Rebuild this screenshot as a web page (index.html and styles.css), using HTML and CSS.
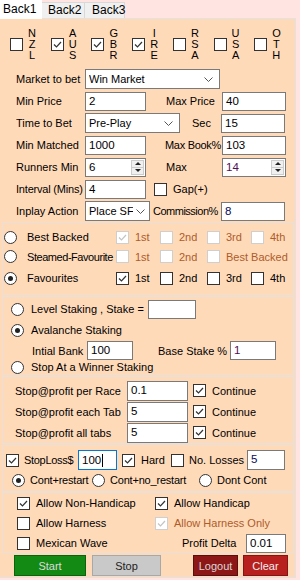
FILE: index.html
```html
<!DOCTYPE html>
<html lang="en">
<head>
  <meta charset="UTF-8">
  <title>Back1</title>
  <link rel="stylesheet" href="styles.css">
</head>
<body>
  <div class="tabs">
    <div class="tab tab-1 active">Back1</div>
    <div class="tab tab-2">Back2</div>
    <div class="tab tab-3">Back3</div>
  </div>

  <div class="panel">
    <div class="countries">
      <div class="country"><span class="cb"></span><span class="code">N<br>Z<br>L</span></div>
      <div class="country"><span class="cb on"><svg viewBox="0 0 11 11"><polyline points="2,5.5 4.5,8 9,3"/></svg></span><span class="code">A<br>U<br>S</span></div>
      <div class="country"><span class="cb on"><svg viewBox="0 0 11 11"><polyline points="2,5.5 4.5,8 9,3"/></svg></span><span class="code">G<br>B<br>R</span></div>
      <div class="country"><span class="cb on"><svg viewBox="0 0 11 11"><polyline points="2,5.5 4.5,8 9,3"/></svg></span><span class="code">I<br>R<br>E</span></div>
      <div class="country"><span class="cb"></span><span class="code">R<br>S<br>A</span></div>
      <div class="country"><span class="cb"></span><span class="code">U<br>S<br>A</span></div>
      <div class="country"><span class="cb"></span><span class="code">O<br>T<br>H</span></div>
    </div>

    <div class="form">
      <div class="row">
        <span class="lbl">Market to bet</span>
        <div class="select w-market"><span class="sel-text">Win Market</span><svg viewBox="0 0 9 5"><polyline points="0.5,0.5 4.5,4.5 8.5,0.5"/></svg></div>
      </div>
      <div class="row">
        <span class="lbl">Min Price</span>
        <div class="field">2</div>
        <span class="lbl2">Max Price</span>
        <div class="field field2">40</div>
      </div>
      <div class="row">
        <span class="lbl">Time to Bet</span>
        <div class="select w-time"><span class="sel-text">Pre-Play</span><svg viewBox="0 0 9 5"><polyline points="0.5,0.5 4.5,4.5 8.5,0.5"/></svg></div>
        <span class="lbl-sec">Sec</span>
        <div class="field field2">15</div>
      </div>
      <div class="row">
        <span class="lbl">Min Matched</span>
        <div class="field">1000</div>
        <span class="lbl2 lbl-book">Max Book%</span>
        <div class="field field2">103</div>
      </div>
      <div class="row">
        <span class="lbl">Runners Min</span>
        <div class="spin"><span class="spin-val">6</span><span class="spin-btns"><span class="up"></span><span class="down"></span></span></div>
        <span class="lbl2">Max</span>
        <div class="spin spin2"><span class="spin-val purple">14</span><span class="spin-btns"><span class="up"></span><span class="down"></span></span></div>
      </div>
      <div class="row">
        <span class="lbl lbl-tight">Interval (Mins)</span>
        <div class="field">4</div>
        <span class="gap-check"><span class="cb"></span>Gap(+)</span>
      </div>
      <div class="row">
        <span class="lbl">Inplay Action</span>
        <div class="select w-inplay"><span class="sel-text">Place SF</span><svg viewBox="0 0 9 5"><polyline points="0.5,0.5 4.5,4.5 8.5,0.5"/></svg></div>
        <span class="lbl-comm">Commission%</span>
        <div class="field field2 navy">8</div>
      </div>
    </div>

    <div class="group g-select">
      <div class="opt-row h20">
        <span class="opt"><span class="rb"></span>Best Backed</span>
        <span class="chk dim"><span class="cb dis on"><svg viewBox="0 0 11 11"><polyline points="2,5.5 4.5,8 9,3"/></svg></span>1st</span>
        <span class="chk dim"><span class="cb dis"></span>2nd</span>
        <span class="chk dim"><span class="cb dis"></span>3rd</span>
        <span class="chk dim"><span class="cb dis"></span>4th</span>
      </div>
      <div class="opt-row h19">
        <span class="opt"><span class="rb"></span><span class="tight">Steamed-Favourite</span></span>
        <span class="chk dim"><span class="cb dis"></span>1st</span>
        <span class="chk dim"><span class="cb dis"></span>2nd</span>
        <span class="chk dim span2"><span class="cb dis"></span>Best Backed</span>
      </div>
      <div class="opt-row h24">
        <span class="opt"><span class="rb on"></span>Favourites</span>
        <span class="chk"><span class="cb on"><svg viewBox="0 0 11 11"><polyline points="2,5.5 4.5,8 9,3"/></svg></span>1st</span>
        <span class="chk"><span class="cb"></span>2nd</span>
        <span class="chk"><span class="cb"></span>3rd</span>
        <span class="chk"><span class="cb"></span>4th</span>
      </div>
    </div>

    <div class="group g-staking">
      <div class="stake-row h20">
        <span class="rb"></span><span class="stake-label">Level Staking , Stake =</span>
        <div class="field w-stake"></div>
      </div>
      <div class="stake-row h22">
        <span class="rb on"></span><span class="stake-label">Avalanche Staking</span>
      </div>
      <div class="bank-row">
        <span class="bank-label">Intial Bank</span>
        <div class="field w-bank">100</div>
        <span class="base-label">Base Stake %</span>
        <div class="field w-bank purple">1</div>
      </div>
      <div class="stake-row h14">
        <span class="rb"></span><span class="stake-label">Stop At a Winner Staking</span>
      </div>
    </div>

    <div class="group g-profit">
      <div class="profit-row">
        <span class="profit-label">Stop@profit per Race</span>
        <div class="field w-profit">0.1</div>
        <span class="cont"><span class="cb on"><svg viewBox="0 0 11 11"><polyline points="2,5.5 4.5,8 9,3"/></svg></span>Continue</span>
      </div>
      <div class="profit-row">
        <span class="profit-label">Stop@profit each Tab</span>
        <div class="field w-profit">5</div>
        <span class="cont"><span class="cb on"><svg viewBox="0 0 11 11"><polyline points="2,5.5 4.5,8 9,3"/></svg></span>Continue</span>
      </div>
      <div class="profit-row">
        <span class="profit-label">Stop@profit all tabs</span>
        <div class="field w-profit">5</div>
        <span class="cont"><span class="cb on"><svg viewBox="0 0 11 11"><polyline points="2,5.5 4.5,8 9,3"/></svg></span>Continue</span>
      </div>
    </div>

    <div class="group g-loss">
      <div class="loss-row">
        <span class="cb on"><svg viewBox="0 0 11 11"><polyline points="2,5.5 4.5,8 9,3"/></svg></span>
        <span class="loss-label">StopLoss$</span>
        <div class="field focus w-loss">100<span class="caret"></span></div>
        <span class="cb on hard-cb"><svg viewBox="0 0 11 11"><polyline points="2,5.5 4.5,8 9,3"/></svg></span>
        <span class="hard-label">Hard</span>
        <span class="cb"></span>
        <span class="losses-label">No. Losses</span>
        <div class="field w-losses navy">5</div>
      </div>
      <div class="cont-row">
        <span class="radio-item r1"><span class="rb on"></span><span class="tight-2">Cont+restart</span></span>
        <span class="radio-item r2"><span class="rb"></span><span class="tight-2">Cont+no_restart</span></span>
        <span class="radio-item r3"><span class="rb"></span>Dont Cont</span>
      </div>
    </div>

    <div class="group g-allow">
      <div class="allow-row">
        <span class="allow"><span class="cb on"><svg viewBox="0 0 11 11"><polyline points="2,5.5 4.5,8 9,3"/></svg></span>Allow Non-Handicap</span>
        <span class="allow"><span class="cb on"><svg viewBox="0 0 11 11"><polyline points="2,5.5 4.5,8 9,3"/></svg></span>Allow Handicap</span>
      </div>
      <div class="allow-row">
        <span class="allow"><span class="cb"></span>Allow Harness</span>
        <span class="allow dim"><span class="cb dis on"><svg viewBox="0 0 11 11"><polyline points="2,5.5 4.5,8 9,3"/></svg></span>Allow Harness Only</span>
      </div>
      <div class="allow-row">
        <span class="allow"><span class="cb"></span>Mexican Wave</span>
        <span class="delta-label">Profit Delta</span>
        <div class="field w-delta">0.01</div>
      </div>
    </div>

    <div class="buttons">
      <button class="btn btn-start">Start</button>
      <button class="btn btn-stop">Stop</button>
      <button class="btn btn-logout">Logout</button>
      <button class="btn btn-clear">Clear</button>
    </div>
  </div>
</body>
</html>
```

FILE: styles.css
```css
body {
  margin: 0;
  width: 300px;
  height: 580px;
  overflow: hidden;
  background-color: #ffe4e1;
  font-family: "Liberation Sans", Arial, sans-serif;
  font-size: 11px;
  color: #000;
  white-space: nowrap;
}

/* tabs */
.tabs {
  display: flex;
  align-items: flex-end;
  height: 18px;
  position: relative;
  z-index: 1;
}
.tab {
  box-sizing: border-box;
  height: 16px;
  line-height: 15px;
  background-color: #f0f0f0;
  border: 1px solid #d9d9d9;
  border-bottom: none;
  font-size: 12px;
}
.tab-1 { width: 42px; padding-left: 2px; }
.tab-2 { width: 43px; padding-left: 6px; border-left: none; }
.tab-3 { width: 40px; padding-left: 7px; border-left: none; }
.tab.active {
  height: 19px;
  line-height: 16px;
  margin-bottom: -1px;
  background-color: #fff;
  border-color: #fff;
}

.panel {
  box-sizing: border-box;
  width: 296px;
  height: 560px;
  background-color: #ffdab9;
  border: 1px solid #e2e2e2;
  border-left: none;
}

/* shared controls */
.cb {
  box-sizing: border-box;
  display: inline-flex;
  width: 13px;
  height: 13px;
  flex: none;
  background-color: #fff;
  border: 1px solid #333;
}
.cb svg {
  width: 11px;
  height: 11px;
}
.cb svg polyline {
  fill: none;
  stroke: #333;
  stroke-width: 1.2;
}
.cb.dis {
  border-color: #cfcfcf;
}
.cb.dis svg polyline {
  stroke: #c4c4c4;
}
.rb {
  box-sizing: border-box;
  display: inline-flex;
  align-items: center;
  justify-content: center;
  width: 13px;
  height: 13px;
  flex: none;
  border: 1px solid #333;
  border-radius: 50%;
  background-color: #fff;
}
.rb.on::after {
  content: "";
  width: 5px;
  height: 5px;
  border-radius: 50%;
  background-color: #222;
}
.field, .select, .spin {
  box-sizing: border-box;
  height: 19px;
  line-height: 17px;
  padding-left: 3px;
  background-color: #fff;
  border: 1px solid #7a7a7a;
  font-size: 11.5px;
  flex: none;
}
.field { width: 61px; }
.field2 { width: 64px; }
.field.focus {
  border-color: #0078d7;
  display: flex;
  align-items: center;
}
.caret {
  width: 1px;
  height: 13px;
  background-color: #000;
  margin-left: 1px;
}
.select {
  display: flex;
  align-items: center;
  height: 20px;
  padding-right: 6px;
  font-size: 11px;
}
.sel-text {
  flex: 1;
  overflow: hidden;
}
.select svg {
  width: 9px;
  height: 5px;
  flex: none;
}
.select svg polyline {
  fill: none;
  stroke: #555;
}
.w-market { width: 135px; }
.w-time { width: 95px; }
.w-inplay { width: 65px; padding-right: 4px; }
.w-inplay .sel-text { margin-right: 3px; }
.spin {
  display: flex;
  width: 61px;
  padding-right: 1px;
}
.spin2 { width: 64px; }
.spin-val { flex: 1; }
.spin-btns {
  display: flex;
  flex-direction: column;
  width: 13px;
  padding: 1px 0;
}
.spin-btns span {
  flex: 1;
  display: flex;
  align-items: center;
  justify-content: center;
  background-color: #f0f0f0;
  border: 1px solid #ccc;
}
.spin-btns .up { border-bottom: none; }
.spin-btns .up::after {
  content: "";
  border: 3px solid transparent;
  border-bottom: 3px solid #222;
  border-top: none;
}
.spin-btns .down::after {
  content: "";
  border: 3px solid transparent;
  border-top: 3px solid #222;
  border-bottom: none;
}
.purple { color: #4f0f55; }
.navy { color: #0a0a5a; }
.dim { color: #ad5c2a; }

/* countries */
.countries {
  display: flex;
  height: 35px;
  padding: 8px 0 0 10px;
}
.country {
  display: flex;
  align-items: center;
  width: 41px;
}
.code {
  width: 8px;
  margin-left: 5px;
  text-align: center;
  font-size: 11px;
  line-height: 11px;
}

/* main form */
.form {
  padding-top: 6px;
}
.row {
  display: flex;
  align-items: center;
  height: 22px;
  padding-left: 16px;
}
.lbl {
  width: 69px;
}
.lbl-tight { letter-spacing: -0.2px; }
.lbl2 {
  box-sizing: border-box;
  width: 76px;
  padding-left: 20px;
}
.lbl-book {
  padding-left: 19px;
  letter-spacing: -0.3px;
}
.lbl-sec {
  box-sizing: border-box;
  width: 41px;
  padding-left: 12px;
}
.lbl-comm {
  box-sizing: border-box;
  width: 71px;
  padding-left: 3px;
  letter-spacing: -0.5px;
}
.gap-check {
  display: flex;
  align-items: center;
  margin-left: 8px;
}
.gap-check .cb { margin-right: 6px; }

/* group boxes */
.group {
  box-sizing: border-box;
  width: 292px;
  margin-left: 2px;
  border: 1px solid #ebe0d7;
}
.g-select { padding: 4px 0; }
.opt-row {
  display: grid;
  grid-template-columns: 113px 44px 47px 44px 1fr;
  align-items: center;
}
.h14 { height: 14px; }
.h19 { height: 19px; }
.h20 { height: 20px; }
.h22 { height: 22px; }
.h24 { height: 24px; }
.opt {
  display: flex;
  align-items: center;
  padding-left: 1px;
}
.opt .rb { margin-right: 10px; }
.tight { letter-spacing: -0.45px; }
.tight-2 { letter-spacing: -0.2px; }
.chk {
  display: flex;
  align-items: center;
}
.chk .cb { margin-right: 6px; }
.span2 { grid-column: span 2; }

.g-staking {
  margin-top: 1px;
  padding-top: 2px;
}
.stake-row {
  display: flex;
  align-items: center;
  padding-left: 8px;
}
.stake-label {
  margin-left: 7px;
}
.h20 .stake-label { width: 117px; }
.w-stake { width: 48px; }
.bank-row {
  display: flex;
  align-items: center;
  height: 19px;
  padding-left: 29px;
}
.bank-label { width: 55px; }
.w-bank { width: 46px; }
.base-label {
  width: 72px;
  margin-left: 25px;
}

.g-profit {
  margin-top: 1px;
  padding-top: 3px;
}
.profit-row {
  display: flex;
  align-items: center;
  height: 21px;
  padding-left: 12px;
}
.profit-label { width: 112px; }
.w-profit { width: 61px; height: 20px; }
.cont {
  display: flex;
  align-items: center;
  margin-left: 5px;
}
.cont .cb { margin-right: 6px; }

.g-loss {
  margin-top: 1px;
  padding-top: 4px;
  height: 47px;
}
.loss-row {
  display: flex;
  align-items: center;
  height: 20px;
  padding-left: 3px;
}
.loss-label {
  width: 54px;
  margin-left: 5px;
  letter-spacing: -0.3px;
}
.w-loss { width: 39px; height: 20px; }
.hard-cb { margin-left: 5px; }
.hard-label {
  width: 30px;
  margin-left: 6px;
}
.losses-label {
  width: 58px;
  margin-left: 5px;
}
.w-losses { width: 38px; height: 20px; }
.cont-row {
  display: flex;
  align-items: center;
  height: 20px;
}
.radio-item {
  display: flex;
  align-items: center;
}
.radio-item .rb { margin-right: 5px; }
.r1 { margin-left: 9px; width: 80px; }
.r2 { width: 107px; }

.g-allow {
  height: 61px;
}
.allow-row {
  display: flex;
  align-items: center;
  height: 20px;
  padding-left: 14px;
}
.allow {
  display: flex;
  align-items: center;
  width: 144px;
}
.allow .cb { margin-right: 6px; }
.delta-label {
  width: 64px;
  margin-left: 21px;
}
.w-delta { width: 40px; }

/* buttons */
.buttons {
  display: flex;
  padding: 2px 0 0 14px;
}
.btn {
  box-sizing: border-box;
  height: 21px;
  padding: 0;
  font-family: inherit;
  font-size: 11px;
  border: 1px solid;
}
.btn-start {
  width: 72px;
  background-color: #138a13;
  border-color: #0b640b;
  color: #dcdcdc;
}
.btn-stop {
  width: 69px;
  margin-left: 6px;
  background-color: #c9c9c9;
  border-color: #a8a8a8;
  color: #222;
}
.btn-logout {
  width: 45px;
  margin-left: 32px;
  background-color: #8d1717;
  border-color: #5e0d0d;
  color: #d8d8d8;
}
.btn-clear {
  width: 45px;
  margin-left: 5px;
  background-color: #b81f1f;
  border-color: #861414;
  color: #f0f0f0;
}
```
